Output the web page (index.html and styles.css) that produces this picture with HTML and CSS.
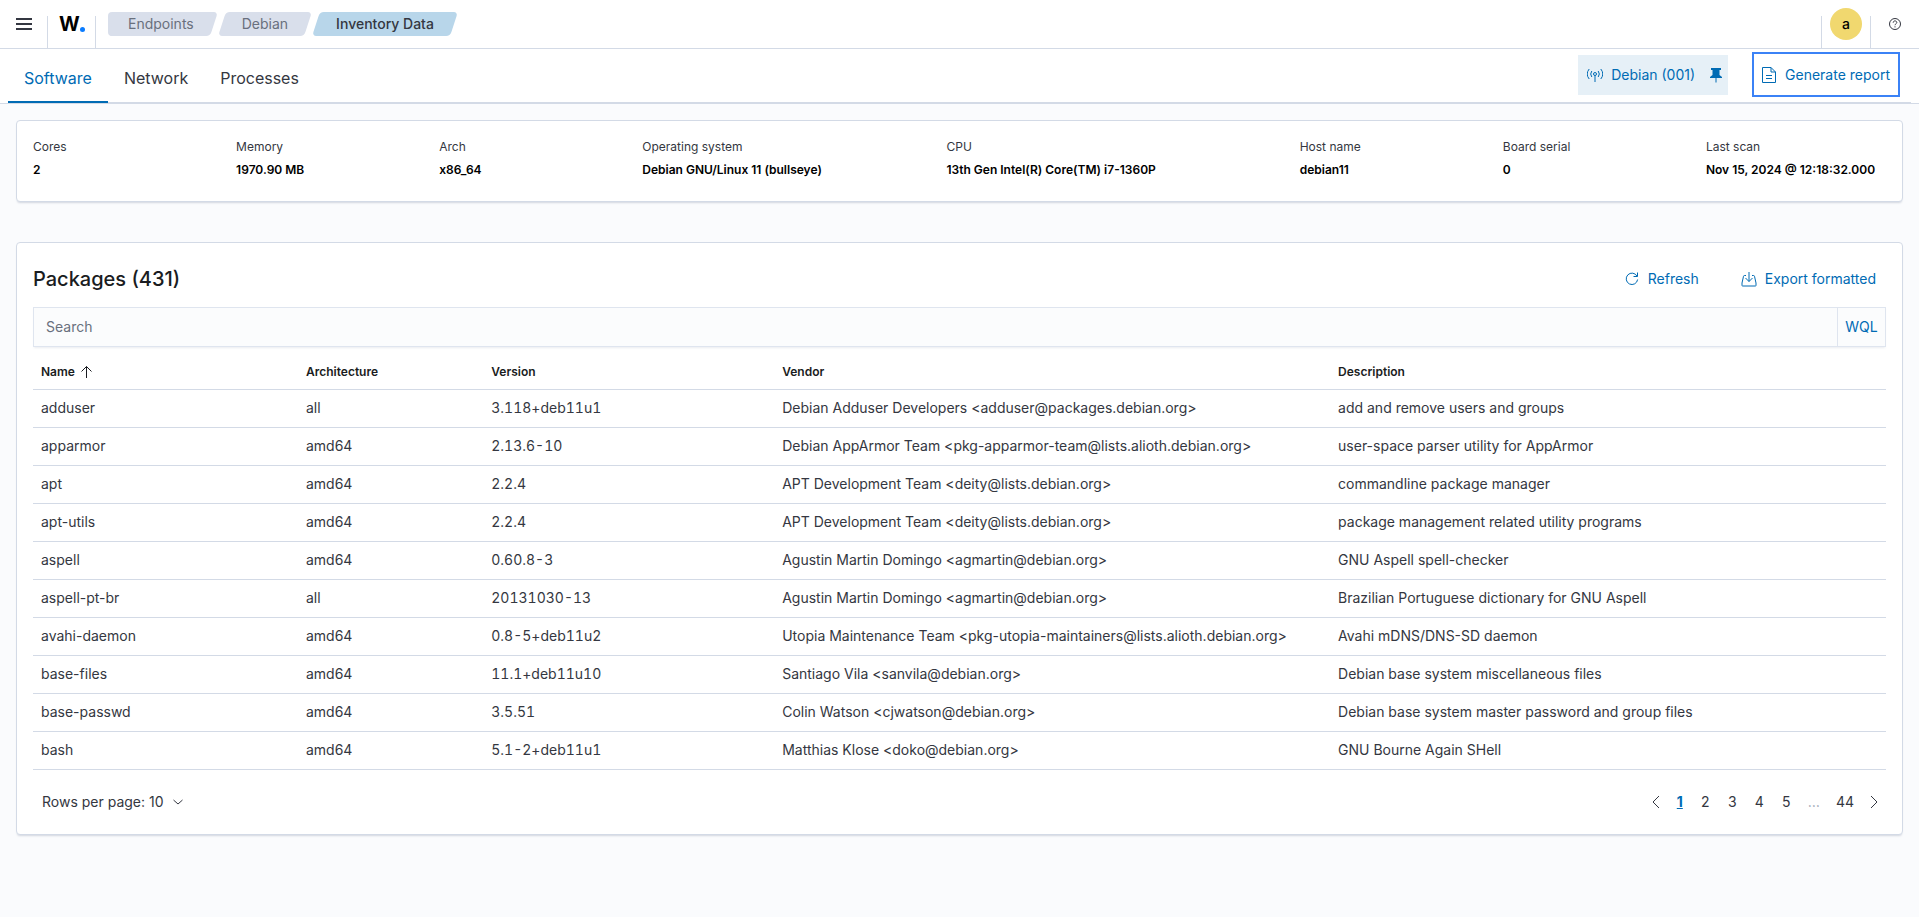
FILE: index.html
```html
<!DOCTYPE html>
<html lang="en">
<head>
  <meta charset="UTF-8" />
  <meta name="viewport" content="width=device-width, initial-scale=1.0" />
  <title>Inventory Data</title>
  <link rel="stylesheet" href="styles.css">
</head>
<body>
  <header class="header">
    <button class="header-item menu-btn" aria-label="Toggle menu">
      <svg width="16" height="16" viewBox="0 0 16 16"><path d="M0 2h16v2H0zM0 7h16v2H0zM0 12h16v2H0z" /></svg>
    </button>
    <a class="header-item logo" href="#" aria-label="Home">W<span class="logo-dot"></span></a>
    <nav class="breadcrumbs" aria-label="Breadcrumbs">
      <a class="crumb crumb-first" href="#"><span>Endpoints</span></a>
      <a class="crumb" href="#"><span>Debian</span></a>
      <a class="crumb crumb-last" href="#" aria-current="page"><span>Inventory Data</span></a>
    </nav>
    <div class="header-right">
      <button class="header-item user-btn" aria-label="Account menu"><span class="avatar">a</span></button>
      <button class="header-item help-btn" aria-label="Help">
        <svg width="16" height="16" viewBox="0 0 16 16" fill="none" stroke="currentColor">
          <circle cx="8" cy="8" r="5.5" />
          <path d="M6.2 6.7c0-1.1.8-1.8 1.8-1.8s1.8.7 1.8 1.6c0 1.2-1.8 1.4-1.8 2.7M8 10.3v1.1" />
        </svg>
      </button>
    </div>
  </header>

  <div class="tab-bar">
    <nav class="tabs" role="tablist">
      <button class="tab active" role="tab" aria-selected="true">Software</button>
      <button class="tab" role="tab">Network</button>
      <button class="tab" role="tab">Processes</button>
    </nav>
    <div class="tab-actions">
      <div class="agent">
        <button class="agent-btn">
          <svg width="16" height="16" viewBox="0 0 16 16" fill="none" stroke="currentColor">
            <circle cx="8" cy="7" r="1.5" />
            <path d="M8 8.500V15M4.800 10a5 5 0 0 1 0-6M11.200 10a5 5 0 0 0 0-6M2.200 12a8 8 0 0 1 0-10M13.800 12a8 8 0 0 0 0-10" />
          </svg>
          Debian (001)
        </button>
        <button class="pin-btn" aria-label="Unpin agent">
          <svg width="16" height="16" viewBox="0 0 16 16"><path d="M3 1h10v2h-1.500v5L14 10v1H8.500v4.500h-1V11H2v-1l2.500-2V3H3z" /></svg>
        </button>
      </div>
      <button class="report-btn">
        <svg width="16" height="16" viewBox="0 0 16 16" fill="none" stroke="currentColor">
          <path d="M10 .5H1.500v15h13V5zM10 .5V5h4.500M5 8.500h6M5 11.500h6" />
        </svg>
        Generate report
      </button>
    </div>
  </div>

  <main class="content">
    <section class="panel">
      <dl class="stats">
        <div><dt>Cores</dt><dd>2</dd></div>
        <div><dt>Memory</dt><dd>1970.90 MB</dd></div>
        <div><dt>Arch</dt><dd>x86_64</dd></div>
        <div><dt>Operating system</dt><dd>Debian GNU/Linux 11 (bullseye)</dd></div>
        <div><dt>CPU</dt><dd>13th Gen Intel(R) Core(TM) i7-1360P</dd></div>
        <div><dt>Host name</dt><dd>debian11</dd></div>
        <div><dt>Board serial</dt><dd>0</dd></div>
        <div><dt>Last scan</dt><dd>Nov 15, 2024 @ 12:18:32.000</dd></div>
      </dl>
    </section>

    <section class="panel packages">
      <div class="panel-head">
        <h1>Packages (431)</h1>
        <div class="panel-actions">
          <button class="link-btn">
            <svg width="16" height="16" viewBox="0 0 16 16" fill="none" stroke="currentColor">
              <path d="M13.500 1.500v4h-4M13 5.200A5.700 5.700 0 1 0 13.600 8.500" />
            </svg>
            Refresh
          </button>
          <button class="link-btn">
            <svg width="16" height="16" viewBox="0 0 16 16" fill="none" stroke="currentColor">
              <path d="M8 1v9.500M4.500 7L8 10.500 11.500 7M5 4.500H3.500Q2.700 4.500 2.500 5.300L1 12v2.500q0 .5.500.5h13q.5 0 .5-.5V12l-1.500-6.700q-.2-.8-1-.8H11" />
            </svg>
            Export formatted
          </button>
        </div>
      </div>

      <div class="search">
        <input type="text" placeholder="Search" aria-label="Search packages" />
        <button class="wql-btn">WQL</button>
      </div>

      <table>
        <colgroup>
          <col class="col-name" />
          <col class="col-arch" />
          <col class="col-version" />
          <col class="col-vendor" />
          <col />
        </colgroup>
        <thead>
          <tr>
            <th aria-sort="ascending">
              <button class="sort-btn">Name
                <svg width="16" height="16" viewBox="0 0 16 16" fill="none" stroke="currentColor"><path d="M7.500 14V2.500M2.500 7.500l5-5 5 5" /></svg>
              </button>
            </th>
            <th>Architecture</th>
            <th>Version</th>
            <th>Vendor</th>
            <th>Description</th>
          </tr>
        </thead>
        <tbody>
          <tr><td>adduser</td><td>all</td><td>3.118+deb11u1</td><td>Debian Adduser Developers &lt;adduser@packages.debian.org&gt;</td><td>add and remove users and groups</td></tr>
          <tr><td>apparmor</td><td>amd64</td><td>2.13.6-10</td><td>Debian AppArmor Team &lt;pkg-apparmor-team@lists.alioth.debian.org&gt;</td><td>user-space parser utility for AppArmor</td></tr>
          <tr><td>apt</td><td>amd64</td><td>2.2.4</td><td>APT Development Team &lt;deity@lists.debian.org&gt;</td><td>commandline package manager</td></tr>
          <tr><td>apt-utils</td><td>amd64</td><td>2.2.4</td><td>APT Development Team &lt;deity@lists.debian.org&gt;</td><td>package management related utility programs</td></tr>
          <tr><td>aspell</td><td>amd64</td><td>0.60.8-3</td><td>Agustin Martin Domingo &lt;agmartin@debian.org&gt;</td><td>GNU Aspell spell-checker</td></tr>
          <tr><td>aspell-pt-br</td><td>all</td><td>20131030-13</td><td>Agustin Martin Domingo &lt;agmartin@debian.org&gt;</td><td>Brazilian Portuguese dictionary for GNU Aspell</td></tr>
          <tr><td>avahi-daemon</td><td>amd64</td><td>0.8-5+deb11u2</td><td>Utopia Maintenance Team &lt;pkg-utopia-maintainers@lists.alioth.debian.org&gt;</td><td>Avahi mDNS/DNS-SD daemon</td></tr>
          <tr><td>base-files</td><td>amd64</td><td>11.1+deb11u10</td><td>Santiago Vila &lt;sanvila@debian.org&gt;</td><td>Debian base system miscellaneous files</td></tr>
          <tr><td>base-passwd</td><td>amd64</td><td>3.5.51</td><td>Colin Watson &lt;cjwatson@debian.org&gt;</td><td>Debian base system master password and group files</td></tr>
          <tr><td>bash</td><td>amd64</td><td>5.1-2+deb11u1</td><td>Matthias Klose &lt;doko@debian.org&gt;</td><td>GNU Bourne Again SHell</td></tr>
        </tbody>
      </table>

      <div class="table-footer">
        <button class="rows-btn">Rows per page: 10
          <svg width="12" height="12" viewBox="0 0 12 12" fill="none" stroke="currentColor"><path d="M1.500 4L6 8l4.500-4" /></svg>
        </button>
        <nav class="pagination" aria-label="Pagination">
          <button class="page arrow" aria-label="Previous page">
            <svg width="16" height="16" viewBox="0 0 16 16" fill="none" stroke="currentColor"><path d="M11 2L5 8l6 6" /></svg>
          </button>
          <a class="page current" href="#" aria-current="page">1</a>
          <a class="page" href="#">2</a>
          <a class="page" href="#">3</a>
          <a class="page" href="#">4</a>
          <a class="page" href="#">5</a>
          <span class="page ellipsis">…</span>
          <a class="page" href="#">44</a>
          <button class="page arrow" aria-label="Next page">
            <svg width="16" height="16" viewBox="0 0 16 16" fill="none" stroke="currentColor"><path d="M5 2l6 6-6 6" /></svg>
          </button>
        </nav>
      </div>
    </section>
  </main>
</body>
</html>
```
FILE: styles.css
```css
:root {
  --text: #343741;
  --title: #1a1c21;
  --primary: #006bb4;
  --border: #d3dae6;
  --page-bg: #fafbfd;
}

* {
  box-sizing: border-box;
}

body {
  margin: 0;
  background: var(--page-bg);
  color: var(--text);
  font-family: Inter, "Liberation Sans", sans-serif;
  font-size: 14px;
  line-height: 20px;
}

button {
  border: none;
  padding: 0;
  background: none;
  color: inherit;
  font: inherit;
  cursor: pointer;
}

a {
  color: inherit;
  text-decoration: none;
}

svg {
  display: block;
  flex: none;
}

/* Header */
.header {
  display: flex;
  align-items: center;
  height: 49px;
  background: #fff;
  border-bottom: 1px solid var(--border);
}

.header-item {
  display: flex;
  align-items: center;
  justify-content: center;
  width: 48px;
  height: 48px;
}

/* short divider on the right edge */
.menu-btn,
.logo,
.user-btn {
  background: linear-gradient(var(--border), var(--border)) 100% 100% / 1px 32px no-repeat;
}

.menu-btn {
  fill: var(--text);
}

.logo {
  color: #000;
  font-size: 20px;
  font-weight: 700;
}

.logo-dot {
  width: 5px;
  height: 5px;
  margin-top: 10px;
  border-radius: 50%;
  background: #0a7cff;
}

.breadcrumbs {
  display: flex;
  align-items: center;
  gap: 8px;
  height: 48px;
  padding-left: 12px;
}

.crumb {
  position: relative;
  z-index: 0;
  height: 24px;
  padding: 0 20px;
  color: #69707d;
  line-height: 24px;
}

.crumb::before {
  content: "";
  position: absolute;
  z-index: -1;
  inset: 0;
  border-radius: 4px;
  background: #d9dfeb;
  transform: skewX(-18deg);
}

.crumb-first {
  border-radius: 4px;
  background: linear-gradient(#d9dfeb, #d9dfeb) 0 0 / 50% 100% no-repeat;
}

.crumb-first::before {
  left: 4px;
}

.crumb-last {
  color: var(--text);
  font-weight: 500;
}

.crumb-last::before {
  background: #b8d6ea;
}

.header-right {
  display: flex;
  margin-left: auto;
  background: linear-gradient(var(--border), var(--border)) 0 100% / 1px 32px no-repeat;
}

.user-btn {
  width: 50px;
}

.avatar {
  width: 32px;
  height: 32px;
  border-radius: 50%;
  background: #f1d86f;
  color: #000;
  font-weight: 500;
  line-height: 32px;
}

/* Tabs */
.tab-bar {
  display: flex;
  justify-content: space-between;
  height: 55px;
  padding: 0 8px;
  background: #fff;
  border-bottom: 1px solid var(--border);
}

.tabs {
  display: flex;
  flex: 1;
  box-shadow: inset 0 -1px var(--border);
}

.tab {
  padding: 4px 16px 0;
  font-size: 16px;
}

.tab.active {
  color: var(--primary);
  box-shadow: inset 0 -2px var(--primary);
}

.tab-actions {
  display: flex;
  align-items: flex-start;
  gap: 24px;
  padding: 3px 11px 0 0;
  box-shadow: inset 0 -1px var(--border);
  color: var(--primary);
}

.agent {
  display: flex;
  align-items: center;
  gap: 13px;
  height: 40px;
  margin-top: 3px;
  padding: 0 4px 0 9px;
  background: #e6f0f7;
}

.agent-btn,
.report-btn,
.link-btn {
  display: flex;
  align-items: center;
  gap: 8px;
}

.pin-btn {
  fill: var(--primary);
}

.report-btn {
  height: 45px;
  padding: 0 8px 0 7px;
  border: 2px solid #3b82f6;
}

/* Panels */
.content {
  padding: 16px;
}

.panel {
  padding: 16px;
  background: #fff;
  border: 1px solid var(--border);
  border-radius: 4px;
  box-shadow: 0 2px 2px -1px rgba(152, 162, 179, .4);
}

.stats {
  display: grid;
  grid-template-columns: 203fr 203fr 203fr 304fr 353fr 203fr 203fr 180fr;
  margin: 0 0 5px;
  font-size: 12px;
}

.stats dd {
  margin: 3px 0 0;
  color: #000;
  font-weight: 600;
  white-space: nowrap;
}

.packages {
  margin-top: 40px;
}

.panel-head {
  display: flex;
  justify-content: space-between;
  align-items: center;
  height: 40px;
}

h1 {
  margin: 0;
  color: var(--title);
  font-size: 20px;
  font-weight: 500;
}

.panel-actions {
  display: flex;
  gap: 42px;
  padding-right: 10px;
}

.link-btn,
.wql-btn {
  color: var(--primary);
}

.search {
  display: flex;
  height: 40px;
  margin-top: 8px;
  border: 1px solid #dfe5ef;
  background: #fbfcfd;
  box-shadow: 0 2px 2px -1px rgba(152, 162, 179, .2);
}

.search input {
  flex: 1;
  padding: 0 12px;
  border: none;
  background: none;
  color: var(--text);
  font: inherit;
}

.search input::placeholder {
  color: #69707d;
}

.wql-btn {
  width: 48px;
  border-left: 1px solid #dfe5ef;
}

/* Packages table */
table {
  width: 100%;
  margin-top: 4px;
  border-collapse: collapse;
  table-layout: fixed;
}

.col-name {
  width: 14.3%;
}

.col-arch {
  width: 10%;
}

.col-version {
  width: 15.7%;
}

.col-vendor {
  width: 30%;
}

th,
td {
  height: 38px;
  padding: 0 8px;
  border-bottom: 1px solid var(--border);
  text-align: left;
}

th {
  padding-top: 4px;
  color: var(--title);
  font-size: 12px;
  font-weight: 600;
}

/* version numbers */
td:nth-child(3) {
  font-variant-numeric: tabular-nums;
}

.sort-btn {
  display: flex;
  align-items: center;
  gap: 4px;
}

.table-footer {
  display: flex;
  justify-content: space-between;
  align-items: center;
  height: 32px;
  margin-top: 16px;
}

.rows-btn {
  display: flex;
  align-items: center;
  gap: 8px;
  padding-left: 9px;
}

.pagination {
  display: flex;
  align-items: center;
}

.page {
  min-width: 27px;
  padding: 0 8px;
  text-align: center;
}

.page.arrow {
  min-width: 24px;
  padding: 0 4px;
}

.page.current {
  min-width: 24px;
  color: var(--primary);
  font-weight: 700;
  text-decoration: underline;
}

.page.ellipsis {
  color: #98a2b3;
}
```
